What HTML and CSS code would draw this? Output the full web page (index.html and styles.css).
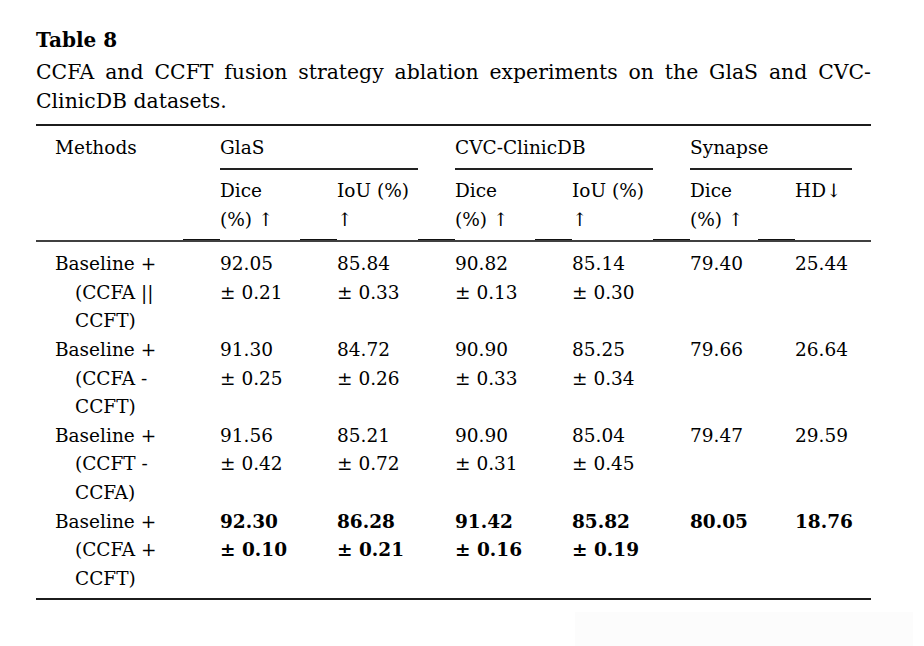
FILE: index.html
```html
<!DOCTYPE html>
<html lang="en">
<head>
<meta charset="utf-8">
<title>Table 8</title>
<link rel="stylesheet" href="styles.css">
</head>
<body>
<div class="page">
  <h1 class="title">Table 8</h1>
  <p class="caption">CCFA and CCFT fusion strategy ablation experiments on the GlaS and CVC-ClinicDB datasets.</p>
  <table class="tbl">
    <colgroup>
      <col class="c-m"><col class="c-a"><col class="c-b"><col class="c-a"><col class="c-b"><col class="c-c"><col class="c-d">
    </colgroup>
    <thead>
      <tr class="h1">
        <th rowspan="2" class="method">Methods</th>
        <th colspan="2"><div class="span">GlaS</div></th>
        <th colspan="2"><div class="span">CVC-ClinicDB</div></th>
        <th colspan="2" class="last"><div class="span">Synapse</div></th>
      </tr>
      <tr class="h2">
        <th>Dice<br>(%) ↑</th>
        <th>IoU (%)<br>↑</th>
        <th>Dice<br>(%) ↑</th>
        <th>IoU (%)<br>↑</th>
        <th>Dice<br>(%) ↑</th>
        <th>HD↓</th>
      </tr>
    </thead>
    <tbody>
      <tr>
        <td class="method">Baseline +<br>(CCFA ||<br>CCFT)</td>
        <td>92.05<br>± 0.21</td>
        <td>85.84<br>± 0.33</td>
        <td>90.82<br>± 0.13</td>
        <td>85.14<br>± 0.30</td>
        <td>79.40</td>
        <td>25.44</td>
      </tr>
      <tr>
        <td class="method">Baseline +<br>(CCFA -<br>CCFT)</td>
        <td>91.30<br>± 0.25</td>
        <td>84.72<br>± 0.26</td>
        <td>90.90<br>± 0.33</td>
        <td>85.25<br>± 0.34</td>
        <td>79.66</td>
        <td>26.64</td>
      </tr>
      <tr>
        <td class="method">Baseline +<br>(CCFT -<br>CCFA)</td>
        <td>91.56<br>± 0.42</td>
        <td>85.21<br>± 0.72</td>
        <td>90.90<br>± 0.31</td>
        <td>85.04<br>± 0.45</td>
        <td>79.47</td>
        <td>29.59</td>
      </tr>
      <tr>
        <td class="method">Baseline +<br>(CCFA +<br>CCFT)</td>
        <td class="best">92.30<br>± 0.10</td>
        <td class="best">86.28<br>± 0.21</td>
        <td class="best">91.42<br>± 0.16</td>
        <td class="best">85.82<br>± 0.19</td>
        <td class="best">80.05</td>
        <td class="best">18.76</td>
      </tr>
    </tbody>
  </table>
</div>
<div class="ghost"></div>
</body>
</html>
```
FILE: styles.css
```css
html, body {
  margin: 0;
  padding: 0;
  background: #ffffff;
}

body {
  width: 924px;
  height: 646px;
  overflow: hidden;
  position: relative;
  font-family: "DejaVu Serif", "Liberation Serif", serif;
  color: #000000;
}

.page {
  padding: 26px 0 0 36px;
  width: 835px;
}

.title {
  margin: 0;
  font-size: 20px;
  font-weight: bold;
  line-height: 28px;
}

.caption {
  margin: 4px 0 0 0;
  font-size: 20.4px;
  line-height: 28.5px;
  text-align: justify;
}

.tbl {
  margin-top: 9px;
  width: 835px;
  table-layout: fixed;
  border-collapse: separate;
  border-spacing: 0;
  border-top: 2px solid #1c1c1c;
  border-bottom: 2px solid #1c1c1c;
  font-size: 18.5px;
  line-height: 28.6px;
}

.c-m { width: 147px; }
.c-a { width: 117px; }
.c-b { width: 118px; }
.c-c { width: 105px; }
.c-d { width: 113px; }

.tbl th,
.tbl td {
  font-weight: normal;
  text-align: left;
  vertical-align: top;
  padding: 0 0 0 37px;
  white-space: nowrap;
}

.tbl .method {
  padding-left: 39px;
  text-indent: -20px;
}

.h1 th {
  padding-top: 8px;
}

.h1 th.method {
  padding-bottom: 6px;
  border-bottom: 2px solid #404040;
}

.h1 th.last {
  padding-right: 19px;
}

.span {
  padding-bottom: 5.5px;
  border-bottom: 2px solid #222222;
}

.h2 th {
  padding-top: 7px;
  padding-bottom: 6px;
  border-bottom: 2px solid #404040;
  background: linear-gradient(#111111, #111111) no-repeat left bottom / 37px 1px;
}

tbody tr:first-child td {
  padding-top: 8px;
}

tbody tr:last-child td {
  padding-bottom: 5px;
}

.tbl td.best {
  font-weight: bold;
}

.ghost {
  position: absolute;
  left: 575px;
  top: 612px;
  width: 338px;
  height: 34px;
  background: #fcfcfc;
}
```
